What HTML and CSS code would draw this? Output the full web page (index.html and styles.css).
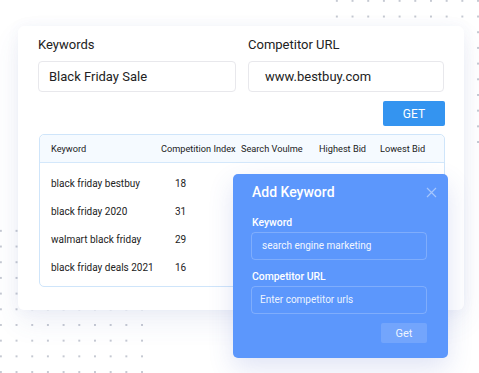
FILE: index.html
```html
<!DOCTYPE html>
<html lang="en">
<head>
    <meta charset="UTF-8">
    <meta name="viewport" content="width=device-width, initial-scale=1.0">
    <title>Keyword Research</title>
    <link rel="stylesheet" href="styles.css">
</head>
<body>
    <div class="stage">
        <div class="dots dots-top"></div>
        <div class="dots dots-bottom"></div>

        <div class="card">
            <div class="form-row">
                <div class="field">
                    <label>Keywords</label>
                    <div class="input">Black Friday Sale</div>
                </div>
                <div class="field">
                    <label>Competitor URL</label>
                    <div class="input input-url">www.bestbuy.com</div>
                </div>
            </div>
            <div class="actions">
                <button class="get-button">GET</button>
            </div>

            <div class="table">
                <div class="row head">
                    <span>Keyword</span>
                    <span>Competition Index</span>
                    <span>Search Voulme</span>
                    <span>Highest Bid</span>
                    <span>Lowest Bid</span>
                </div>
                <div class="rows">
                    <div class="row"><span>black friday bestbuy</span><span class="num">18</span></div>
                    <div class="row"><span>black friday 2020</span><span class="num">31</span></div>
                    <div class="row"><span>walmart black friday</span><span class="num">29</span></div>
                    <div class="row"><span>black friday deals 2021</span><span class="num">16</span></div>
                </div>
            </div>
        </div>

        <div class="modal">
            <div class="modal-head">
                <h2>Add Keyword</h2>
                <svg class="close" width="11" height="11" viewBox="0 0 11 11"><path d="M1 1 L10 10 M10 1 L1 10" stroke="currentColor" stroke-width="1.2" fill="none"/></svg>
            </div>
            <label class="first">Keyword</label>
            <div class="modal-input">search engine marketing</div>
            <label>Competitor URL</label>
            <div class="modal-input placeholder">Enter competitor urls</div>
            <div class="modal-actions">
                <button class="modal-get">Get</button>
            </div>
        </div>
    </div>
</body>
</html>
```
FILE: styles.css
```css
body { margin: 0; background: #fff; font-family: Roboto, "Liberation Sans", sans-serif; color: #222; }
.stage { position: relative; width: 479px; height: 373px; overflow: hidden; padding-top: 26px; box-sizing: border-box; }

/* decorative dot grids */
.dots { position: absolute; background-image: radial-gradient(circle, #c5c9d2 0.8px, transparent 1.1px); background-size: 15.7px 15.7px; }
.dots-top { left: 329px; top: -7px; width: 160px; height: 160px; }
.dots-bottom { left: -7px; top: 223px; width: 158px; height: 160px; }

.card { position: relative; margin-left: 18px; width: 446px; height: 284px; box-sizing: border-box; padding: 11px 19px 0 20px; background: #fff; border-radius: 6px; box-shadow: 0 12px 28px rgba(70, 90, 170, 0.09), 0 0 14px rgba(70, 90, 170, 0.05); }

.form-row { display: grid; grid-template-columns: 198px 196px; gap: 12px; }
.field label { display: block; font-size: 13px; line-height: 16px; margin-bottom: 8px; }
.input { height: 31px; box-sizing: border-box; border: 1px solid #e8e8ec; border-radius: 4px; padding: 0 10px; font-size: 13px; line-height: 29px; color: #222; }
.input-url { padding-left: 16px; }

.actions { display: flex; justify-content: flex-end; margin-top: 9px; }
.get-button { width: 62px; height: 25px; border: none; border-radius: 2px; background: #3494f0; color: #fff; font-family: inherit; font-size: 12px; padding: 0; }

.table { margin-top: 8px; width: 406px; margin-left: 1px; border: 1px solid #cfe5fa; border-radius: 5px; box-sizing: border-box; height: 153px; }
.row { display: grid; grid-template-columns: 121px 80px 78px 61px 1fr; font-size: 10px; align-items: center; }
.row span { white-space: nowrap; }
.row span:first-child { padding-left: 11px; }
.head { height: 27px; background: #f5faff; border-bottom: 1px solid #d4e8fb; border-radius: 5px 5px 0 0; font-size: 9.2px; color: #222; }
.rows { padding-top: 6px; }
.rows .row { height: 28px; }
.num { padding-left: 14px; }

.modal { position: absolute; left: 233px; top: 174px; width: 215px; height: 184px; box-sizing: border-box; padding: 9px 21px 0 18px; background: #5c97fc; border-radius: 5px; color: #fff; box-shadow: 0 10px 26px rgba(60, 90, 190, 0.16); }
.modal-head { display: flex; justify-content: space-between; align-items: center; padding-left: 1px; }
.modal-head h2 { margin: 0; font-size: 14px; font-weight: 500; line-height: 18px; }
.close { color: rgba(255, 255, 255, 0.45); margin-right: -10px; }
.modal label { display: block; font-size: 10.4px; font-weight: 500; line-height: 13px; margin: 10px 0 3px 1px; }
.modal label.first { margin-top: 15px; }
.modal-input { height: 28px; box-sizing: border-box; border: 1px solid rgba(255, 255, 255, 0.22); border-radius: 4px; padding: 0 10px; font-size: 10px; line-height: 26px; color: #f2f6ff; }
.placeholder { padding-left: 8px; color: rgba(255, 255, 255, 0.9); }
.modal-actions { display: flex; justify-content: flex-end; margin-top: 9px; }
.modal-get { width: 46px; height: 20px; border: none; border-radius: 2px; background: rgba(255, 255, 255, 0.14); color: rgba(255, 255, 255, 0.9); font-family: inherit; font-size: 11px; padding: 0; }
```
